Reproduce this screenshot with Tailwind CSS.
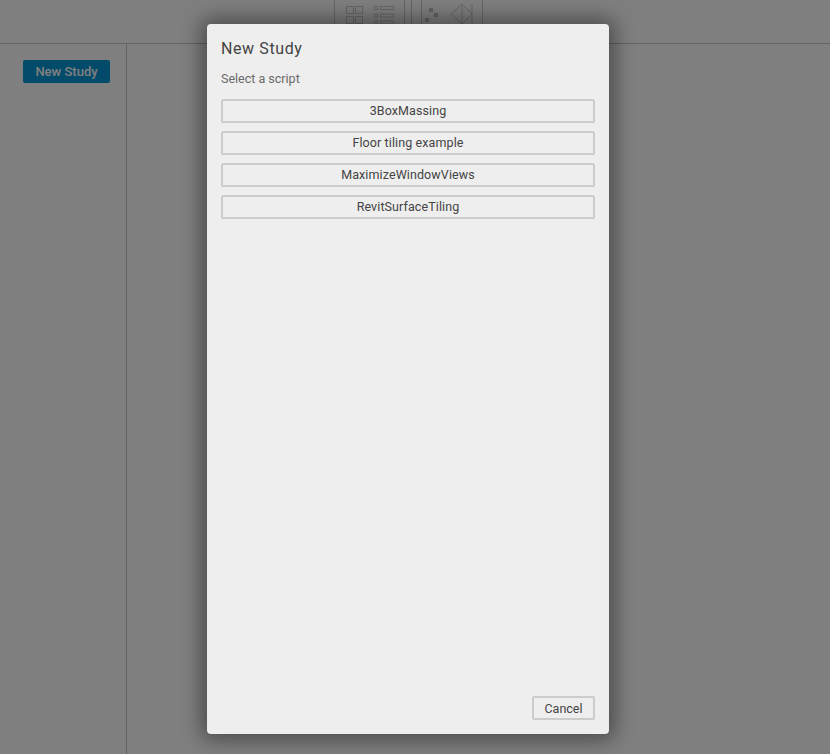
<!DOCTYPE html>
<html><head><meta charset="utf-8"><script src="https://cdn.jsdelivr.net/npm/@tailwindcss/browser@4"></script></head>
<body class="m-0 overflow-hidden">
<div class="relative w-[830px] h-[754px] bg-[#fefefe] font-['Roboto',sans-serif] overflow-hidden">
  <header class="h-[44px] border-b border-[#c8c8c8] pl-[334px] flex">
    <div class="flex h-[43px]">
      <div class="w-[71px] h-full border-x border-[#ccc] flex items-start pl-[11px] gap-[10px] pt-[6px]">
        <svg width="18" height="18" viewBox="0 0 18 18" fill="none" stroke="#ccc" stroke-width="1"><rect x=".5" y=".5" width="7" height="7"/><rect x="9.5" y=".5" width="7" height="7"/><rect x=".5" y="10.5" width="7" height="7"/><rect x="9.5" y="10.5" width="7" height="7"/></svg>
        <svg width="20" height="18" viewBox="0 0 20 18" fill="none" stroke="#ccc" stroke-width="1"><rect x=".5" y=".5" width="3" height="3"/><rect x="6.5" y=".5" width="13" height="3"/><rect x=".5" y="8" width="3" height="3"/><rect x="6.5" y="8" width="13" height="3"/><rect x=".5" y="15" width="3" height="3"/><rect x="6.5" y="15" width="13" height="3"/></svg>
      </div>
      <div class="w-[7px] border-r border-[#ccc]"></div>
      <div class="w-[71px] h-full border-r border-[#ccc] flex items-start">
        <div class="w-[10px] h-full border-r border-[#ccc]"></div>
        <svg class="ml-[3px] mt-[8px]" width="14" height="14" viewBox="0 0 14 14" fill="#c4c4c4"><rect x="4" y="0" width="4" height="4"/><rect x="9" y="5" width="4" height="4"/><rect x="0" y="10" width="4" height="4"/></svg>
        <svg class="ml-[11px] mt-[3px]" width="24" height="22" viewBox="0 0 24 22" fill="none" stroke="#ccc" stroke-width="1"><path d="M1 11 12 1v20zM12 1l10 10-10 10M22 1v20"/></svg>
      </div>
    </div>
  </header>
  <div class="flex h-[710px]">
    <aside class="w-[127px] border-r border-[#c8c8c8] pl-[23px] pt-[16px]">
      <button class="block w-[87px] h-[23px] rounded-[2px] bg-[#0696d7] text-white text-[13px] font-medium leading-[23px] text-center">New Study</button>
    </aside>
  </div>
  <div class="absolute inset-0 bg-black/50"></div>
  <div class="absolute left-[207px] top-[24px] w-[402px] h-[710px] rounded-[4px] bg-[#eeeeee] shadow-[0_0_20px_6px_rgba(0,0,0,0.4)] px-[14px] pt-[15px] pb-[14px] flex flex-col text-[#444444]">
    <h1 class="text-[16px] leading-[20px] tracking-[0.6px] font-normal">New Study</h1>
    <p class="mt-[11px] text-[12.5px] leading-[18px] text-[#6a6a6a]">Select a script</p>
    <div class="mt-[11px] flex flex-col gap-[8px]">
      <button class="h-[24px] border-2 border-[#cccccc] rounded-[2px] text-[12.5px] tracking-[0.1px] pt-[1px] text-center">3BoxMassing</button>
      <button class="h-[24px] border-2 border-[#cccccc] rounded-[2px] text-[12.5px] tracking-[0.1px] pt-[1px] text-center">Floor tiling example</button>
      <button class="h-[24px] border-2 border-[#cccccc] rounded-[2px] text-[12.5px] tracking-[0.1px] pt-[1px] text-center">MaximizeWindowViews</button>
      <button class="h-[24px] border-2 border-[#cccccc] rounded-[2px] text-[12.5px] tracking-[0.1px] pt-[1px] text-center">RevitSurfaceTiling</button>
    </div>
    <div class="mt-auto flex justify-end">
      <button class="w-[63px] h-[24px] border-2 border-[#cccccc] rounded-[2px] text-[12.5px] pt-[2px] text-center">Cancel</button>
    </div>
  </div>
</div>
</body></html>
